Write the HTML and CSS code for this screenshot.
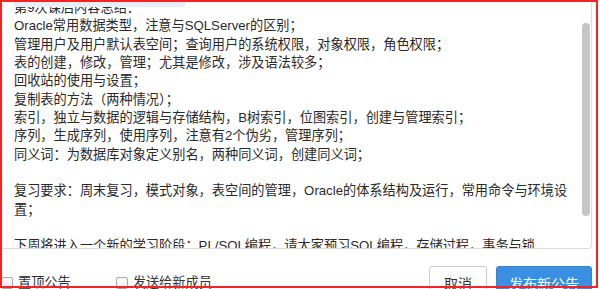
FILE: index.html
```html
<!DOCTYPE html>
<html lang="zh">
<head>
	<meta charset="UTF-8">
	<title>发布新公告</title>
	<link rel="stylesheet" href="styles.css">
</head>
<body>
	<div class="dialog">
		<div class="editor">
			<div class="editor-head"></div>
			<div class="editor-text">
				<div class="line">第9次课后内容总结：</div>
				<div class="line">Oracle常用数据类型，注意与SQLServer的区别；</div>
				<div class="line">管理用户及用户默认表空间；查询用户的系统权限，对象权限，角色权限；</div>
				<div class="line">表的创建，修改，管理；尤其是修改，涉及语法较多；</div>
				<div class="line">回收站的使用与设置；</div>
				<div class="line">复制表的方法（两种情况）；</div>
				<div class="line">索引，独立与数据的逻辑与存储结构，B树索引，位图索引，创建与管理索引；</div>
				<div class="line">序列，生成序列，使用序列，注意有2个伪劣，管理序列；</div>
				<div class="line">同义词：为数据库对象定义别名，两种同义词，创建同义词；</div>
				<div class="line">&nbsp;</div>
				<div class="line">复习要求：周末复习，模式对象，表空间的管理，Oracle的体系结构及运行，常用命令与环境设</div>
				<div class="line">置；</div>
				<div class="line">&nbsp;</div>
				<div class="line">下周将进入一个新的学习阶段：PL/SQL编程，请大家预习SQL编程，存储过程，事务与锁</div>
			</div>
			<div class="editor-scroll">
				<div class="editor-thumb"></div>
			</div>
		</div>
		<div class="footer">
			<label class="check"><span class="check-box"></span>置顶公告</label>
			<label class="check"><span class="check-box"></span>发送给新成员</label>
			<div class="actions">
				<button class="btn">取消</button>
				<button class="btn btn-primary">发布新公告</button>
			</div>
		</div>
		<div class="frame"></div>
	</div>
</body>
</html>
```

FILE: styles.css
```css
* {
	margin: 0;
	padding: 0;
	box-sizing: border-box;
}
html, body {
	width: 600px;
	height: 289px;
	overflow: hidden;
	background: #fff;
}
body {
	font-family: "Liberation Sans", "Noto Sans CJK SC", sans-serif;
	color: #333;
}
.dialog {
	position: relative;
	width: 600px;
	height: 289px;
	overflow: hidden;
}
/* 编辑区 */
.editor {
	position: relative;
	display: flex;
	width: 592px;
	height: 249px;
	border: 1px solid #dcdcdc;
	border-top: none;
	border-radius: 0 0 4px 4px;
	overflow: hidden;
}
.editor-head {
	position: absolute;
	left: 13px;
	top: 0;
	width: 171px;
	height: 7px;
	background: #e9eef4;
	z-index: 2;
}
.editor-text {
	flex: 1;
	padding-left: 13px;
	margin-top: -1px;
	font-size: 13.2px;
	line-height: 18.33px;
	color: #2a2a2a;
}
.editor-text .line {
	white-space: nowrap;
}
.editor-scroll {
	width: 10px;
	padding: 23px 1px 0 1px;
}
.editor-thumb {
	width: 8px;
	height: 193px;
	background: #c6c6c6;
	border-radius: 4px;
}
/* 底部 */
.footer {
	display: flex;
	align-items: flex-start;
	width: 592px;
	padding-top: 17px;
}
.check {
	display: flex;
	align-items: center;
	margin-top: 10px;
	font-size: 13.2px;
	line-height: 14px;
	color: #333;
}
.check + .check {
	margin-left: 44px;
}
.check-box {
	width: 12px;
	height: 12px;
	margin: 0 5px 0 1px;
	border: 1px solid #a9a9a9;
	border-radius: 2px;
	background: linear-gradient(#fff, #ececec);
}
.actions {
	display: flex;
	margin-left: auto;
}
.btn {
	height: 34px;
	padding: 0 14px;
	border: 1px solid #ccc;
	border-radius: 3px;
	background: #fff;
	font-family: "Liberation Sans", "Noto Sans CJK SC", sans-serif;
	font-size: 14px;
	color: #333;
}
.btn-primary {
	margin-left: 9px;
	padding: 0 12px;
	border-color: #3583d2;
	background: #3b8fe0;
	color: #fff;
}
/* 截图红框 */
.frame {
	position: absolute;
	left: 0;
	top: 0;
	width: 598px;
	height: 288px;
	border: 2px solid #f52323;
	z-index: 5;
}
```
